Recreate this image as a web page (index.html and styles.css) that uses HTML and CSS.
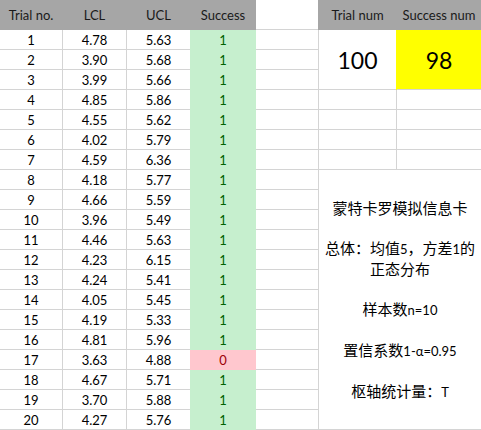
FILE: index.html
```html
<!DOCTYPE html>
<html lang="zh">
<head>
<meta charset="utf-8">
<title>Monte Carlo</title>
<link rel="stylesheet" href="styles.css">
</head>
<body>
<div class="sheet">
  <div class="c h">Trial no.</div><div class="c h">LCL</div><div class="c h">UCL</div><div class="c h">Success</div><div class="c"></div><div class="c h fl">Trial num</div><div class="c h">Success num</div>

  <div class="c">1</div><div class="c">4.78</div><div class="c">5.63</div><div class="c ok">1</div><div class="c"></div><div class="c big span3">100</div><div class="c big span3 yel">98</div>
  <div class="c">2</div><div class="c">3.90</div><div class="c">5.68</div><div class="c ok">1</div><div class="c"></div>
  <div class="c">3</div><div class="c">3.99</div><div class="c">5.66</div><div class="c ok">1</div><div class="c"></div>
  <div class="c">4</div><div class="c">4.85</div><div class="c">5.86</div><div class="c ok">1</div><div class="c"></div><div class="c"></div><div class="c"></div>
  <div class="c">5</div><div class="c">4.55</div><div class="c">5.62</div><div class="c ok">1</div><div class="c"></div><div class="c"></div><div class="c"></div>
  <div class="c">6</div><div class="c">4.02</div><div class="c">5.79</div><div class="c ok">1</div><div class="c"></div><div class="c"></div><div class="c"></div>
  <div class="c">7</div><div class="c">4.59</div><div class="c">6.36</div><div class="c ok">1</div><div class="c"></div><div class="c"></div><div class="c"></div>
  <div class="c">8</div><div class="c">4.18</div><div class="c">5.77</div><div class="c ok">1</div><div class="c"></div>
  <div class="c card">
    <p>蒙特卡罗模拟信息卡</p>
    <p>总体：均值<span class="lat">5</span>，方差<span class="lat">1</span>的<br>正态分布</p>
    <p>样本数<span class="lat">n=10</span></p>
    <p>置信系数<span class="lat">1-α=0.95</span></p>
    <p>枢轴统计量：<span class="lat">T</span></p>
  </div>
  <div class="c">9</div><div class="c">4.66</div><div class="c">5.59</div><div class="c ok">1</div><div class="c"></div>
  <div class="c">10</div><div class="c">3.96</div><div class="c">5.49</div><div class="c ok">1</div><div class="c"></div>
  <div class="c">11</div><div class="c">4.46</div><div class="c">5.63</div><div class="c ok">1</div><div class="c"></div>
  <div class="c">12</div><div class="c">4.23</div><div class="c">6.15</div><div class="c ok">1</div><div class="c"></div>
  <div class="c">13</div><div class="c">4.24</div><div class="c">5.41</div><div class="c ok">1</div><div class="c"></div>
  <div class="c">14</div><div class="c">4.05</div><div class="c">5.45</div><div class="c ok">1</div><div class="c"></div>
  <div class="c">15</div><div class="c">4.19</div><div class="c">5.33</div><div class="c ok">1</div><div class="c"></div>
  <div class="c">16</div><div class="c">4.81</div><div class="c">5.96</div><div class="c ok">1</div><div class="c"></div>
  <div class="c">17</div><div class="c">3.63</div><div class="c">4.88</div><div class="c bad">0</div><div class="c"></div>
  <div class="c">18</div><div class="c">4.67</div><div class="c">5.71</div><div class="c ok">1</div><div class="c"></div>
  <div class="c">19</div><div class="c">3.70</div><div class="c">5.88</div><div class="c ok">1</div><div class="c"></div>
  <div class="c">20</div><div class="c">4.27</div><div class="c">5.76</div><div class="c ok">1</div><div class="c"></div>
</div>
</body>
</html>
```
FILE: styles.css
```css
html, body {
  margin: 0;
  padding: 0;
  background: #fff;
  overflow: hidden;
}
.sheet {
  display: grid;
  grid-template-columns: 63px 64px 64px 65px 63px 78px 85px;
  grid-template-rows: 30px repeat(20, 20px);
  font-family: Lato, "Noto Sans CJK SC", sans-serif;
  font-size: 13px;
  color: #000;
  width: 482px;
}
.c {
  box-sizing: border-box;
  border-right: 1px solid #d4d4d4;
  border-bottom: 1px solid #d4d4d4;
  display: flex;
  align-items: center;
  justify-content: center;
  white-space: nowrap;
}
.h {
  background: #a6a6a6;
  border-color: #a6a6a6;
  color: #1a1a1a;
}
.fl {
  box-shadow: -1px 0 0 #a6a6a6;
}
.ok {
  background: #c6efce;
  border-color: #c6efce;
  color: #006100;
  box-shadow: -1px 0 0 #c6efce;
}
.bad {
  background: #ffc7ce;
  border-color: #ffc7ce;
  color: #9c0006;
  box-shadow: -1px 0 0 #ffc7ce;
}
.span3 {
  grid-row: span 3;
}
.big {
  font-size: 23px;
}
.yel {
  background: #ffff00;
  border-right-color: #ffff00;
  box-shadow: -1px 0 0 #ffff00;
}
.card {
  grid-column: span 2;
  grid-row: span 13;
  flex-direction: column;
  gap: 20px;
  font-family: "Noto Sans CJK SC", sans-serif;
  font-size: 15px;
  text-align: center;
}
.card p {
  margin: 0;
  line-height: 20px;
}
.lat {
  font-family: Lato, sans-serif;
  font-size: 13px;
}
```
